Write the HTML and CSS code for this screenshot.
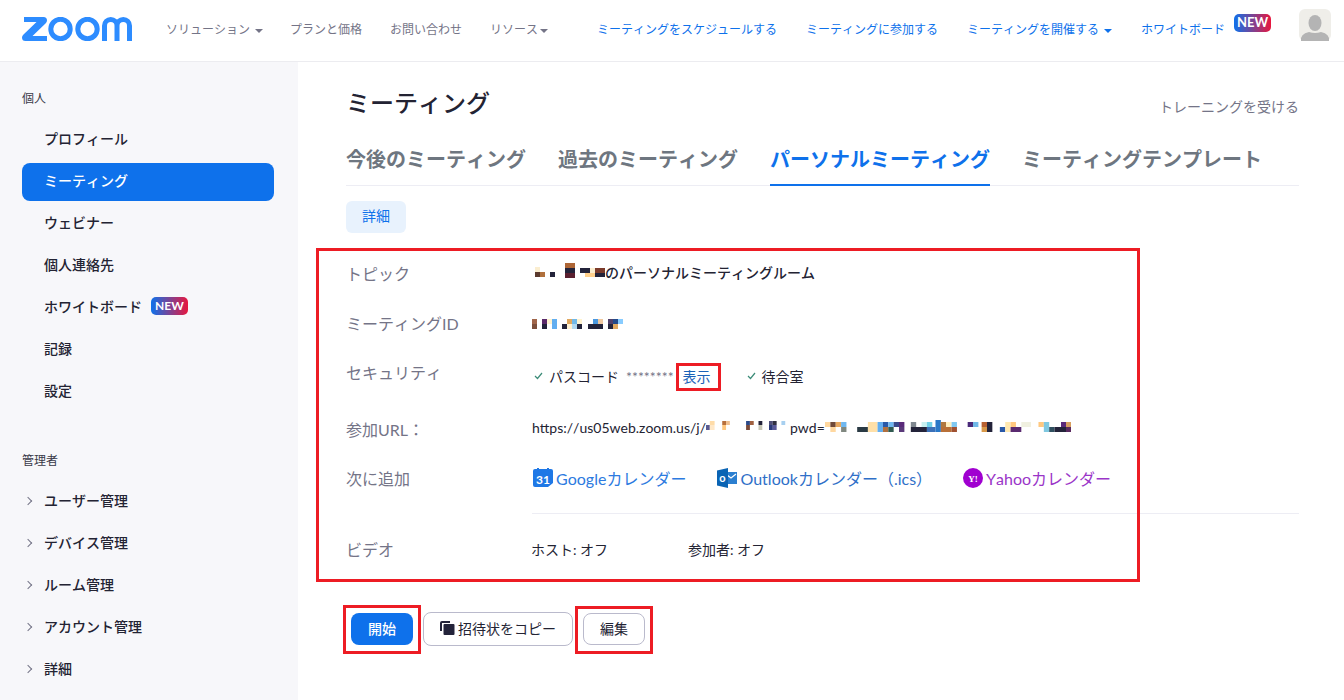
FILE: index.html
```html
<!DOCTYPE html>
<html lang="ja">
<head>
    <meta charset="UTF-8">
    <title>ミーティング</title>
    <link rel="stylesheet" href="styles.css">
</head>
<body>

<header class="topbar">
    <svg class="logo" viewBox="0 0 110 24" width="110" height="24">
        <path fill="#2d8cff" d="M2 0H21.500Q25 0 25 3.500Q25 5 23.500 6.500L10.500 19H25V24H3.500Q0 24 0 20.500Q0 19 1.500 17.500L14.500 5H2z"/>
        <g fill="none" stroke="#2d8cff" stroke-width="5">
            <circle cx="38.500" cy="12" r="9.700"/>
            <circle cx="65.500" cy="12" r="9.700"/>
            <path d="M82.500 24V8.750a6.250 6.250 0 0 1 12.500 0V24M95 8.750a6.250 6.250 0 0 1 12.500 0V24"/>
        </g>
    </svg>
    <nav class="nav-left">
        <a class="nav-first">ソリューション<i class="caret"></i></a>
        <a>プランと価格</a>
        <a>お問い合わせ</a>
        <a>リソース<i class="caret caret-near"></i></a>
    </nav>
    <nav class="nav-right">
        <a>ミーティングをスケジュールする</a>
        <a>ミーティングに参加する</a>
        <a>ミーティングを開催する<i class="caret"></i></a>
        <a class="has-new">ホワイトボード<span class="new new-top">NEW</span></a>
    </nav>
    <svg class="avatar" viewBox="0 0 32 32" width="32" height="32">
        <rect width="32" height="32" rx="6" fill="#efeee9"/>
        <ellipse cx="16" cy="14" rx="6.500" ry="8" fill="#b4b4b4"/>
        <path fill="#b4b4b4" d="M2 32Q1 25 10 23Q16 25 22 23Q31 25 30 32z"/>
    </svg>
</header>

<div class="layout">
    <aside class="sidebar">
        <div class="side-title">個人</div>
        <a class="side-item">プロフィール</a>
        <a class="side-item active">ミーティング</a>
        <a class="side-item">ウェビナー</a>
        <a class="side-item">個人連絡先</a>
        <a class="side-item">ホワイトボード<span class="new new-side">NEW</span></a>
        <a class="side-item">記録</a>
        <a class="side-item">設定</a>

        <div class="side-title admin">管理者</div>
        <a class="side-item sub">ユーザー管理</a>
        <a class="side-item sub">デバイス管理</a>
        <a class="side-item sub">ルーム管理</a>
        <a class="side-item sub">アカウント管理</a>
        <a class="side-item sub">詳細</a>
    </aside>

    <main class="content">
        <div class="title-row">
            <h1>ミーティング</h1>
            <a class="training">トレーニングを受ける</a>
        </div>

        <div class="tabs">
            <a>今後のミーティング</a>
            <a>過去のミーティング</a>
            <a class="active">パーソナルミーティング</a>
            <a>ミーティングテンプレート</a>
        </div>

        <button class="detail-btn">詳細</button>

        <div class="rows">
            <div class="row row-topic">
                <div class="label">トピック</div>
                <div class="value topic">
                    <svg class="mosaic" width="72" height="15" viewBox="0 0 72 15">
                        <rect x="2" y="4" width="5" height="5" fill="#fbeed0"/><rect x="7" y="9" width="5" height="5" fill="#b0703c"/><rect x="2" y="9" width="5" height="5" fill="#5b3a2e"/>
                        <rect x="17" y="9" width="5" height="5" fill="#23233a"/>
                        <rect x="32" y="0" width="10" height="5" fill="#ad6535"/><rect x="32" y="5" width="10" height="5" fill="#23233a"/><rect x="32" y="10" width="10" height="5" fill="#5a2030"/>
                        <rect x="47" y="5" width="10" height="5" fill="#23233a"/><rect x="52" y="10" width="10" height="4" fill="#ffd08c"/><rect x="57" y="5" width="5" height="5" fill="#fbeed0"/><rect x="62" y="5" width="10" height="5" fill="#7b3a2a"/><rect x="62" y="10" width="10" height="4" fill="#23233a"/>
                    </svg><span>のパーソナルミーティングルーム</span>
                </div>
            </div>
            <div class="row row-id">
                <div class="label">ミーティングID</div>
                <div class="value">
                    <svg class="mosaic" width="92" height="14" viewBox="0 0 92 14">
                        <rect x="0" y="3" width="5" height="5" fill="#a0654a"/><rect x="0" y="8" width="5" height="5" fill="#7c4f3c"/>
                        <rect x="10" y="3" width="5" height="5" fill="#5a2a6a"/><rect x="10" y="8" width="5" height="5" fill="#23233a"/><rect x="15" y="3" width="5" height="5" fill="#fff3d0"/>
                        <rect x="20" y="3" width="5" height="10" fill="#62aef0"/>
                        <rect x="30" y="3" width="5" height="5" fill="#fff"/><rect x="30" y="8" width="5" height="5" fill="#23233a"/><rect x="35" y="3" width="5" height="5" fill="#e0a860"/><rect x="35" y="8" width="5" height="5" fill="#fff0d0"/><rect x="40" y="3" width="5" height="5" fill="#70b8e8"/><rect x="40" y="8" width="5" height="5" fill="#b0d8f0"/><rect x="45" y="3" width="5" height="5" fill="#fff3d0"/><rect x="45" y="8" width="5" height="5" fill="#23233a"/>
                        <rect x="56" y="8" width="15" height="5" fill="#23233a"/><rect x="61" y="3" width="5" height="5" fill="#4a98e0"/><rect x="66" y="3" width="5" height="5" fill="#f0c8a0"/>
                        <rect x="76" y="3" width="5" height="5" fill="#50406a"/><rect x="76" y="8" width="5" height="5" fill="#23233a"/><rect x="81" y="3" width="5" height="5" fill="#244a8a"/><rect x="81" y="8" width="5" height="5" fill="#e0a860"/><rect x="86" y="3" width="5" height="5" fill="#88ccff"/>
                    </svg>
                </div>
            </div>
            <div class="row row-security">
                <div class="label">セキュリティ</div>
                <div class="value security">
                    <svg class="check" width="9" height="8" viewBox="0 0 9 8"><path d="M1 4l2.500 2.500L8 1" fill="none" stroke="#3c8c78" stroke-width="1.200"/></svg>
                    <span class="pass-label">パスコード</span>
                    <span class="stars">********</span>
                    <a class="show">表示</a>
                    <svg class="check check-wait" width="9" height="8" viewBox="0 0 9 8"><path d="M1 4l2.500 2.500L8 1" fill="none" stroke="#3c8c78" stroke-width="1.200"/></svg>
                    <span class="pass-label">待合室</span>
                </div>
            </div>
            <div class="row row-url">
                <div class="label">参加URL：</div>
                <div class="value url">
                    <span>https://us05web.zoom.us/j/</span>
                    <svg class="mosaic" width="84" height="14" viewBox="0 0 88 14" preserveAspectRatio="none">
                        <rect x="0" y="4" width="4" height="5" fill="#5a5a90"/><rect x="4" y="0" width="5" height="4" fill="#ffdca8"/><rect x="4" y="4" width="5" height="5" fill="#ffe8c8"/>
                        <rect x="17" y="0" width="4" height="4" fill="#b8703c"/><rect x="21" y="0" width="4" height="4" fill="#f0c090"/><rect x="17" y="4" width="4" height="5" fill="#ffc880"/>
                        <rect x="42" y="0" width="4" height="4" fill="#2a4a8a"/><rect x="46" y="0" width="4" height="4" fill="#a06040"/><rect x="42" y="4" width="4" height="5" fill="#7a4a38"/>
                        <rect x="55" y="0" width="4" height="4" fill="#23233a"/><rect x="55" y="4" width="4" height="5" fill="#c8c8b8"/>
                        <rect x="66" y="0" width="4" height="4" fill="#50507a"/><rect x="66" y="4" width="4" height="5" fill="#2a3a7a"/><rect x="70" y="0" width="4" height="4" fill="#303040"/><rect x="70" y="4" width="4" height="5" fill="#5a5a9a"/>
                        <rect x="79" y="0" width="4" height="4" fill="#a8d0f0"/>
                    </svg>
                    <span class="pwd">pwd=</span>
                    <svg class="mosaic" width="236" height="16" viewBox="0 0 220 16" preserveAspectRatio="none">
                        <rect x="0" y="2" width="5" height="5" fill="#ffd8a0"/><rect x="5" y="2" width="5" height="5" fill="#704a3a"/><rect x="10" y="2" width="5" height="5" fill="#e8a860"/><rect x="15" y="2" width="5" height="5" fill="#70b8f0"/><rect x="5" y="7" width="5" height="5" fill="#ffd8a0"/><rect x="15" y="7" width="5" height="5" fill="#808880"/>
                        <rect x="30" y="7" width="10" height="5" fill="#2a3a44"/><rect x="40" y="2" width="9" height="10" fill="#ffe0a8"/><rect x="49" y="2" width="5" height="10" fill="#62aef0"/>
                        <rect x="54" y="2" width="5" height="5" fill="#2858a8"/><rect x="54" y="7" width="5" height="5" fill="#b07040"/><rect x="59" y="2" width="5" height="5" fill="#70b8f0"/><rect x="59" y="7" width="5" height="5" fill="#305a50"/><rect x="64" y="2" width="5" height="5" fill="#3a4a8a"/><rect x="69" y="2" width="5" height="5" fill="#5a2a7a"/><rect x="69" y="7" width="5" height="5" fill="#5a3a7a"/>
                        <rect x="80" y="2" width="5" height="5" fill="#808890"/><rect x="80" y="7" width="15" height="5" fill="#23233a"/><rect x="90" y="2" width="5" height="5" fill="#c8f0f0"/><rect x="95" y="7" width="8" height="5" fill="#3a70b8"/><rect x="95" y="2" width="5" height="5" fill="#70d0e8"/><rect x="103" y="0" width="5" height="12" fill="#2878c8"/>
                        <rect x="108" y="2" width="5" height="5" fill="#b07840"/><rect x="113" y="2" width="5" height="5" fill="#fff0c0"/><rect x="108" y="7" width="10" height="5" fill="#b87038"/><rect x="118" y="2" width="5" height="5" fill="#80c8f0"/><rect x="118" y="7" width="5" height="5" fill="#a05030"/>
                        <rect x="133" y="2" width="5" height="5" fill="#4a2a7a"/><rect x="138" y="2" width="5" height="5" fill="#70b8e8"/>
                        <rect x="146" y="2" width="5" height="5" fill="#b86030"/><rect x="146" y="7" width="5" height="5" fill="#d89848"/><rect x="151" y="2" width="5" height="10" fill="#23233a"/>
                        <rect x="163" y="7" width="5" height="5" fill="#2858a8"/><rect x="168" y="2" width="5" height="10" fill="#ffe8b0"/><rect x="173" y="7" width="10" height="5" fill="#5a2a70"/><rect x="173" y="2" width="5" height="5" fill="#ffc880"/><rect x="183" y="2" width="9" height="5" fill="#f0f0e0"/>
                        <rect x="199" y="2" width="5" height="5" fill="#ffc880"/><rect x="204" y="2" width="5" height="10" fill="#80c8e0"/><rect x="209" y="7" width="5" height="5" fill="#305060"/><rect x="214" y="7" width="6" height="5" fill="#23233a"/>
                    </svg>
                    <svg class="mosaic" width="14" height="16" viewBox="0 0 14 16">
                        <rect x="0" y="2" width="5" height="5" fill="#5a2a7a"/><rect x="5" y="2" width="5" height="5" fill="#d8a060"/><rect x="0" y="7" width="5" height="5" fill="#23233a"/><rect x="5" y="7" width="5" height="5" fill="#5a2a60"/>
                    </svg>
                </div>
            </div>
            <div class="row row-add">
                <div class="label">次に追加</div>
                <div class="value calendars">
                    <a class="cal cal-blue">
                        <svg width="20" height="20" viewBox="0 0 20 20"><path d="M2 1H18a2 2 0 0 1 2 2V15L15 19H2a2 2 0 0 1-2-2V3a2 2 0 0 1 2-2z" fill="#1f78e6"/><rect x="4" y="0" width="2" height="3" fill="#1f78e6"/><rect x="14" y="0" width="2" height="3" fill="#1f78e6"/><text x="10" y="16" text-anchor="middle" class="cal-num">31</text></svg>
                        Googleカレンダー
                    </a>
                    <a class="cal cal-outlook">
                        <svg width="20" height="20" viewBox="0 0 20 20"><rect x="9" y="4" width="11" height="12" fill="#2b7fd0"/><path d="M10 7l4 3 5-4" fill="none" stroke="#fff" stroke-width="1.200"/><path d="M0 2.500L11 0v20L0 17.500z" fill="#0a64b4"/><text x="5.500" y="14" text-anchor="middle" class="cal-o">o</text></svg>
                        Outlookカレンダー（.ics）
                    </a>
                    <a class="cal cal-yahoo">
                        <svg width="20" height="20" viewBox="0 0 20 20"><circle cx="10" cy="10" r="10" fill="#a000d0"/><text x="10" y="13.500" text-anchor="middle" class="cal-y">Y!</text></svg>
                        Yahooカレンダー
                    </a>
                </div>
            </div>
            <div class="divider"></div>
            <div class="row row-video">
                <div class="label">ビデオ</div>
                <div class="value video">
                    <span class="host">ホスト: オフ</span>
                    <span>参加者: オフ</span>
                </div>
            </div>
        </div>

        <div class="actions">
            <button class="btn btn-primary">開始</button>
            <button class="btn btn-copy">
                <svg width="15" height="15" viewBox="0 0 15 15"><path d="M0 3a2 2 0 0 1 2-2h8v2H2v8H0z" fill="#23233a"/><rect x="3.500" y="4" width="11" height="11" rx="1" fill="#23233a"/></svg>
                招待状をコピー
            </button>
            <button class="btn btn-edit">編集</button>
        </div>

        <!-- 赤枠の注釈 -->
        <div class="mark mark-details"></div>
        <div class="mark mark-show"></div>
        <div class="mark mark-start"></div>
        <div class="mark mark-edit"></div>
    </main>
</div>

</body>
</html>
```

FILE: styles.css
```css
* {
    box-sizing: border-box;
}

body {
    margin: 0;
    height: 700px;
    overflow: hidden;
    background-color: #ffffff;
    color: #232333;
    font-family: Lato, "Noto Sans CJK JP", sans-serif;
    font-size: 14px;
    font-kerning: none;
}

a {
    text-decoration: none;
}

/* ヘッダー */
.topbar {
    height: 62px;
    display: flex;
    align-items: center;
    padding: 0 13px 0 22px;
    border-bottom: 1px solid #ececf0;
}

.logo {
    flex: none;
    margin-top: -3px;
}

.nav-left {
    display: flex;
    gap: 28px;
    margin-left: 34px;
    font-size: 12px;
    color: #747487;
    margin-top: -4px;
    white-space: nowrap;
}

.nav-first {
    margin-right: -1px;
}

.nav-right {
    display: flex;
    gap: 29px;
    margin-left: auto;
    margin-right: 28px;
    font-size: 12px;
    color: #0e71eb;
    margin-top: -4px;
    white-space: nowrap;
}

.caret {
    display: inline-block;
    width: 0;
    height: 0;
    margin-left: 5px;
    vertical-align: middle;
    border-top: 4px solid currentColor;
    border-left: 4px solid transparent;
    border-right: 4px solid transparent;
}

.caret-near {
    margin-left: 2px;
}

.has-new {
    position: relative;
    padding-right: 46px;
}

.new {
    font-weight: 700;
    color: #ffffff;
    background: linear-gradient(90deg, #0e71eb 0%, #e8173e 100%);
    border-radius: 5px;
    text-align: center;
}

.new-top {
    position: absolute;
    right: 0;
    top: -6px;
    width: 37px;
    height: 18px;
    font-size: 13px;
    line-height: 17px;
}

.new-side {
    display: inline-block;
    width: 37px;
    height: 18px;
    margin-left: 9px;
    font-size: 12px;
    line-height: 18px;
}

.avatar {
    flex: none;
    margin-top: -11px;
}

/* レイアウト */
.layout {
    display: flex;
    height: 638px;
}

.sidebar {
    width: 298px;
    flex: none;
    background-color: #f7f7fa;
    padding: 28px 24px 0 22px;
}

.side-title {
    font-size: 12px;
    line-height: 18px;
    margin-bottom: 13px;
    color: #393948;
}

.side-title.admin {
    margin-top: 41px;
    margin-bottom: 13px;
}

.side-item {
    display: flex;
    align-items: center;
    height: 38px;
    margin-bottom: 4px;
    padding: 0 0 4px 22px;
    font-size: 14px;
    font-weight: 500;
    border-radius: 8px;
    color: #232333;
    position: relative;
}

.side-item.active {
    background-color: #0e71eb;
    color: #ffffff;
}

.side-item.sub::before {
    content: "";
    position: absolute;
    left: 3px;
    top: 15px;
    width: 5px;
    height: 5px;
    border-top: 1px solid #747487;
    border-right: 1px solid #747487;
    transform: rotate(45deg);
}

/* メイン */
.content {
    flex: 1;
    position: relative;
    padding: 0 45px 0 48px;
}

.title-row {
    display: flex;
    justify-content: space-between;
    height: 66px;
    padding-top: 21px;
}

h1 {
    margin: 0;
    font-size: 24px;
    line-height: 40px;
    font-weight: 500;
    color: #232333;
}

.training {
    font-size: 14px;
    line-height: 20px;
    margin-top: 14px;
    color: #747487;
}

.tabs {
    display: flex;
    gap: 32px;
    height: 58px;
    border-bottom: 1px solid #ededf4;
}

.tabs a {
    height: 58px;
    font-size: 20px;
    line-height: 30px;
    font-weight: 700;
    color: #6e7680;
    padding-top: 16px;
}

.tabs a.active {
    color: #0e71eb;
    border-bottom: 2px solid #0e71eb;
}

.detail-btn {
    display: block;
    width: 60px;
    height: 32px;
    margin-top: 15px;
    padding: 0 0 4px;
    border: none;
    border-radius: 6px;
    background-color: #e8f2fd;
    color: #0e71eb;
    font-family: inherit;
    font-size: 14px;
}

.rows {
    margin-top: 15px;
}

.row {
    display: flex;
    align-items: center;
}

.label {
    width: 186px;
    flex: none;
    font-size: 16px;
    color: #747487;
}

.value {
    display: flex;
    align-items: center;
}

.row-topic { height: 50px; }
.row-id { height: 50px; }
.row-security { height: 48px; }
.row-url { height: 65px; }
.row-add { height: 34px; }
.row-video { height: 70px; }

.topic {
    margin-left: 1px;
    font-weight: 500;
    font-size: 14px;
    margin-top: -2px;
}

.mosaic {
    flex: none;
}

.topic .mosaic {
    margin-top: -3px;
}

.security {
    margin-left: 2px;
    margin-top: 8px;
}

.check {
    margin-right: 6px;
}

.check-wait {
    margin-left: 36px;
}

.pass-label {
    font-size: 14px;
}

.stars {
    margin-left: 7px;
    font-size: 14px;
    color: #747487;
}

.show {
    margin-left: 9px;
    font-size: 14px;
    color: #1a62b8;
}

.url {
    font-size: 14px;
    margin-top: -2px;
}

.calendars {
    gap: 31px;
    margin-left: 1px;
}

.cal {
    display: flex;
    align-items: center;
    gap: 3px;
    font-size: 16px;
}

.cal-blue { color: #2d7ae0; }
.cal-outlook { color: #2f6fc8; }
.cal-yahoo { color: #9a35c8; }

.cal-num {
    font-size: 12px;
    font-weight: 700;
    fill: #ffffff;
}

.cal-o {
    font-size: 11px;
    font-weight: 700;
    fill: #ffffff;
}

.cal-y {
    font-family: "Liberation Serif", serif;
    font-size: 9px;
    font-weight: 700;
    fill: #ffffff;
}

.divider {
    height: 1px;
    margin: 18px 0 0 186px;
    background-color: #ededf4;
}

.video {
    font-size: 14px;
    margin-left: -1px;
}

.host {
    width: 157px;
}

.actions {
    display: flex;
    align-items: center;
    gap: 10px;
    margin-top: 28px;
    margin-left: 5px;
}

.btn {
    height: 32px;
    padding: 0 0 3px;
    border-radius: 8px;
    font-family: inherit;
    font-size: 14px;
    background-color: #ffffff;
    color: #232333;
    border: 1px solid #babacc;
}

.btn-primary {
    width: 62px;
    border: none;
    background-color: #0e71eb;
    color: #ffffff;
    font-weight: 500;
}

.btn-copy {
    width: 150px;
    height: 34px;
    display: flex;
    align-items: center;
    justify-content: center;
    gap: 3px;
}

.btn-edit {
    width: 62px;
}

/* 赤枠 */
.mark {
    position: absolute;
    border: 3px solid #ed1c24;
}

.mark-details {
    left: 18px;
    top: 186px;
    width: 824px;
    height: 334px;
}

.mark-show {
    left: 378px;
    top: 301px;
    width: 45px;
    height: 28px;
}

.mark-start {
    left: 45px;
    top: 543px;
    width: 78px;
    height: 49px;
}

.mark-edit {
    left: 277px;
    top: 544px;
    width: 78px;
    height: 48px;
}
```
